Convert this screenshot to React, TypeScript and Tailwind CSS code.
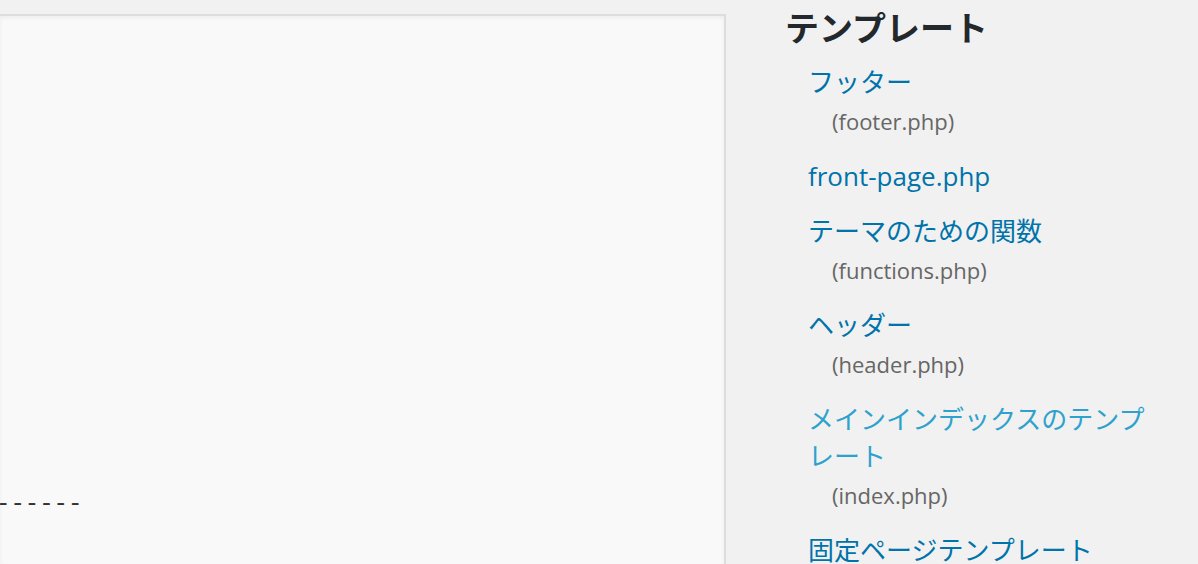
const files = [
  { label: "フッター", file: "footer.php" },
  { label: "front-page.php" },
  { label: "テーマのための関数", file: "functions.php" },
  { label: "ヘッダー", file: "header.php" },
  { label: "メインインデックスのテンプレート", file: "index.php", current: true },
  { label: "固定ページテンプレート", file: "page.php" },
];

const FileItem = ({ label, file, current }: { label: string; file?: string; current?: boolean }) => {
  return (
    <li className="flex flex-col">
      <a
        href="#"
        className={
          "block text-[26px] leading-[37px] no-underline " +
          (current ? "text-[#2ea2cc]" : "text-[#0073aa]")
        }
      >
        {label}
      </a>
      {file && (
        <span className="mt-[1px] block pl-[24px] text-[22px] leading-[38px] text-[#666]">({file})</span>
      )}
    </li>
  );
};

export default function App() {
  return (
    <div
      className="flex h-[564px] w-[1198px] overflow-hidden bg-[#f1f1f1]"
      style={{ fontFamily: '"Open Sans", "Noto Sans CJK JP", sans-serif' }}
    >
      {/* editor textarea */}
      <div className="mt-[14px] w-[726px] shrink-0 border-t-2 border-r-2 border-[#dddddd] bg-[#f9f9f9] shadow-[inset_0_2px_4px_rgba(0,0,0,0.05)]">
        <pre
          className="ml-[-4px] mt-[470px] text-[24px] leading-[36px] text-[#333]"
          style={{ fontFamily: '"Liberation Mono", monospace' }}
        >
          ------
        </pre>
      </div>

      {/* template sidebar */}
      <div className="flex-1 pl-[59px] pt-[8px]">
        <h3 className="text-[34px] font-bold leading-[40px] text-[#23282d]">テンプレート</h3>
        <ul className="mt-[16px] flex w-[373px] flex-col gap-[18px] pl-[23px]">
          {files.map((f) => (
            <FileItem key={f.label} label={f.label} file={f.file} current={f.current} />
          ))}
        </ul>
      </div>
    </div>
  );
}
